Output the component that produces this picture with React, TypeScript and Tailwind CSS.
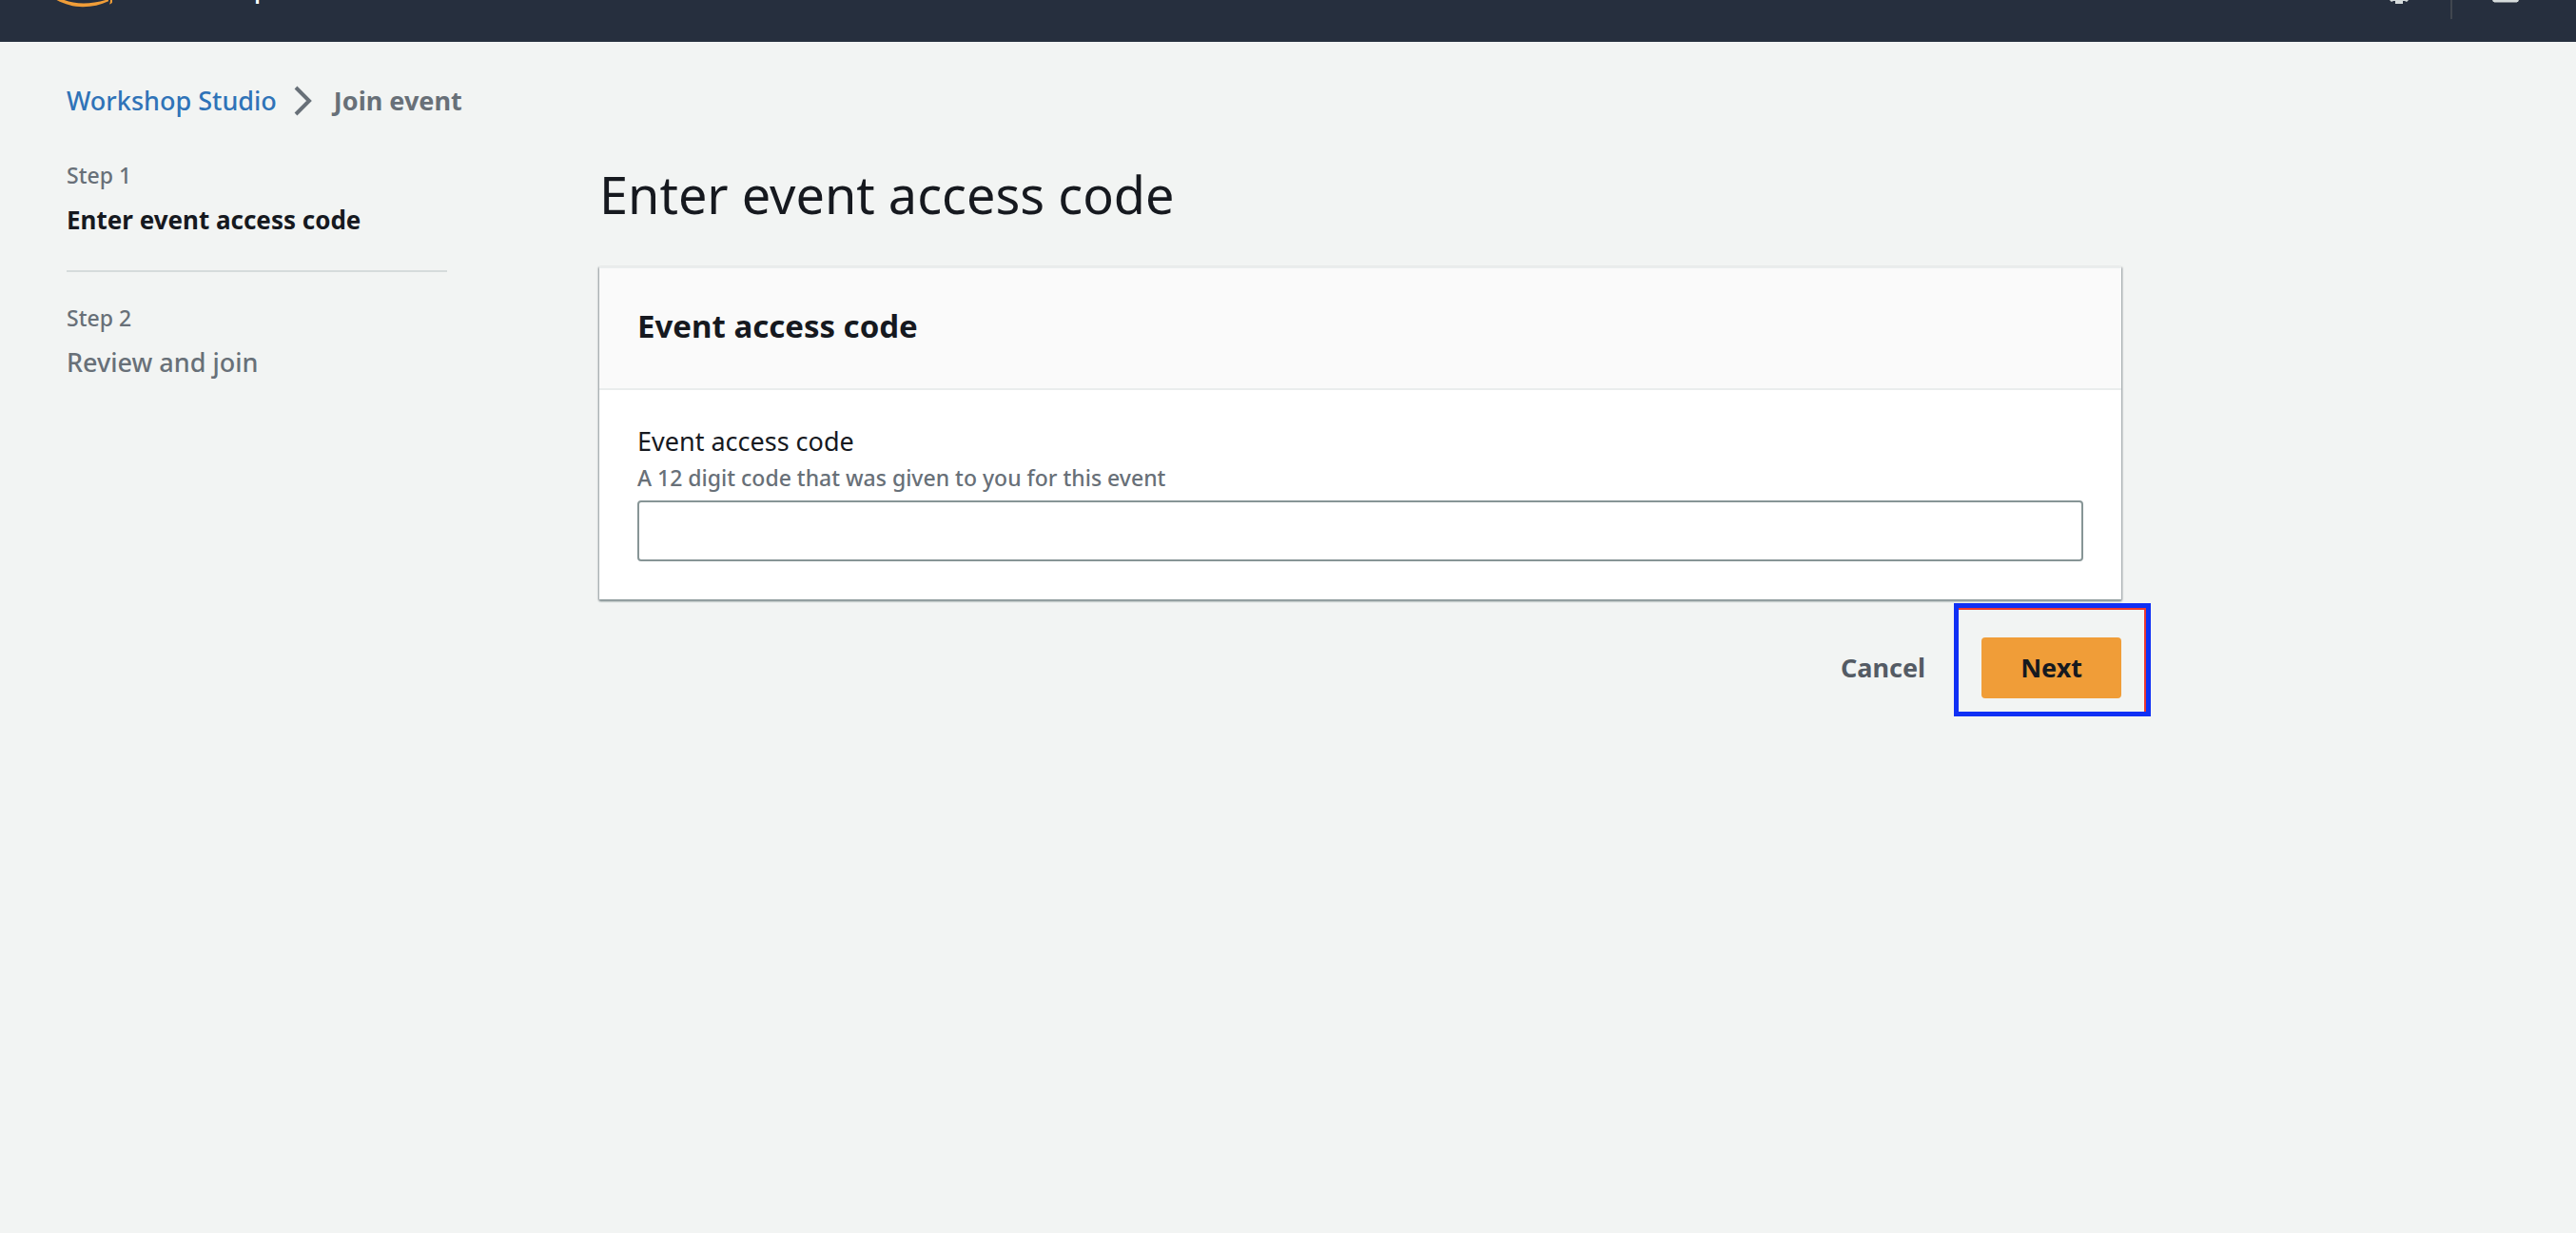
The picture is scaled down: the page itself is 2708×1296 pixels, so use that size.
import React from "react";

const steps = [
  { label: "Step 1", title: "Enter event access code", active: true },
  { label: "Step 2", title: "Review and join", active: false },
];

function TopBar() {
  return (
    <header className="flex h-11 items-start justify-between overflow-hidden bg-[#262f3e] pr-15 pl-[58px]">
      <div className="flex items-start gap-[30px]">
        <svg className="h-2 w-15" viewBox="0 0 60 8" aria-hidden="true">
          <path d="M-2 -2 C8 4 18 7.2 29 7.2 C39 7.2 48 5 56 1.2 L56 -1 C48 2 38 3.4 30 3.4 C20 3.4 12 1.5 5 -2 Z" fill="#f09d38" />
          <path d="M57 4.5 C58 3 58 1 58 -1 L61 -1 C61 1 60 4 57 4.5 Z" fill="#f09d38" />
        </svg>
        <span className="-mt-8 text-[28px] leading-9 font-medium text-white">Workshop Studio</span>
      </div>
      <div className="flex items-start">
        <button type="button" aria-label="Settings" className="h-1 w-5">
          <svg className="block h-1 w-5" viewBox="0 0 20 4" aria-hidden="true">
            <path d="M0 0H20L18 2L16 1H14V4H6V1H4L2 2Z" fill="#d5dbdb" />
          </svg>
        </button>
        <span className="ml-11 h-5 w-0.5 bg-[#414750]" />
        <button type="button" aria-label="Language" className="ml-[42px] h-[3px] w-7">
          <svg className="block h-[3px] w-7" viewBox="0 0 28 3" aria-hidden="true">
            <path d="M0 0H28L27 2H1Z" fill="#d5dbdb" />
            <path d="M2 2H26V3H2Z" fill="#7c838a" />
          </svg>
        </button>
      </div>
    </header>
  );
}

function Highlight() {
  return (
    <span className="pointer-events-none absolute -top-9 -right-[31px] -bottom-[19px] -left-[29px] border-[5px] border-[#1030f5]">
      <span className="block h-full w-full border-t-2 border-r-2 border-[#ee3a2e]" />
    </span>
  );
}

export default function App() {
  return (
    <div className="min-h-screen bg-[#f2f4f3] font-['Noto_Sans',sans-serif] text-[27px] leading-10 text-[#16191f]">
      <TopBar />
      <nav aria-label="Breadcrumb" className="flex items-center px-[70px] pt-[42px]">
        <a href="#" className="font-medium text-[#2f73b8]">Workshop Studio</a>
        <svg className="mr-[22px] ml-[18px] h-8 w-5" viewBox="0 0 20 32" fill="none" stroke="#687078" strokeWidth="4" aria-hidden="true">
          <path d="M2 2 L16 16 L2 30" />
        </svg>
        <span className="font-bold text-[#687078]">Join event</span>
      </nav>
      <div className="flex items-start gap-40 px-[70px] pt-[42px]">
        <ol className="w-100 shrink-0 divide-y-2 divide-[#d5dbdb]">
          {steps.map((s) => (
            <li key={s.label} className="pb-[33px] not-first:pt-8">
              <p className="text-[23px] leading-8 font-medium text-[#687078]">{s.label}</p>
              <p className={s.active ? "mt-[11px] text-[26px] font-bold" : "mt-[11px] font-medium text-[#687078]"}>{s.title}</p>
            </li>
          ))}
        </ol>
        <main className="max-w-400 grow">
          <h1 className="text-[54px] leading-[72px]">Enter event access code</h1>
          <section className="mt-10 border-t-2 border-[#eaeded] bg-white shadow-[0_2px_2px_#879596,1px_1px_2px_rgba(0,7,22,0.3),-1px_1px_2px_rgba(0,7,22,0.3)]">
            <div className="border-b-2 border-[#eaeded] bg-[#fafafa] px-10 pt-[39px] pb-[43px]">
              <h2 className="text-[33px] leading-11 font-bold">Event access code</h2>
            </div>
            <div className="px-10 pt-[34px] pb-10">
              <label htmlFor="code" className="block">Event access code</label>
              <p id="hint" className="text-[23px] leading-9 font-medium text-[#687078]">A 12 digit code that was given to you for this event</p>
              <input id="code" aria-describedby="hint" className="mt-1.5 block h-16 w-full rounded border-2 border-[#879596] bg-white px-5" />
            </div>
          </section>
          <div className="mt-10 flex items-center justify-end gap-[59px]">
            <button type="button" className="font-bold text-[#545b64]">Cancel</button>
            <button type="button" className="relative h-16 rounded bg-[#f09d38] px-[41px] font-bold">
              Next
              <Highlight />
            </button>
          </div>
        </main>
      </div>
    </div>
  );
}
